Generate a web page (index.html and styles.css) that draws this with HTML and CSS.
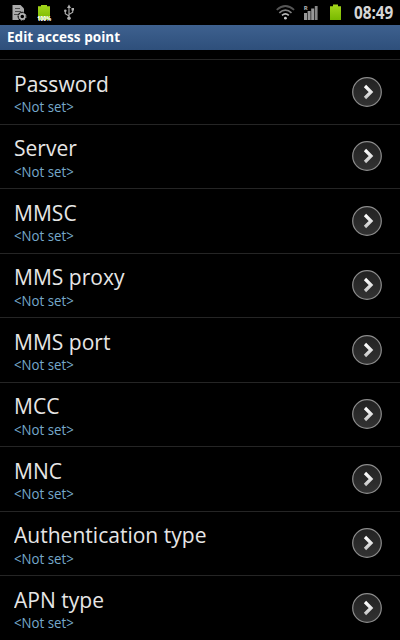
FILE: index.html
```html
<!DOCTYPE html>
<html lang="en">
<head>
<meta charset="utf-8">
<title>Edit access point</title>
<link rel="stylesheet" href="styles.css">
</head>
<body>
<svg class="defs" width="0" height="0" aria-hidden="true">
  <defs>
    <linearGradient id="disc" x1="0" y1="0" x2="0" y2="1"><stop offset="0" stop-color="#222"/><stop offset="1" stop-color="#323232"/></linearGradient>
    <linearGradient id="arrow" x1="0" y1="0" x2="0" y2="1"><stop offset="0" stop-color="#fff"/><stop offset="1" stop-color="#c8c8c8"/></linearGradient>
    <linearGradient id="batt" x1="0" y1="0" x2="0" y2="1"><stop offset="0" stop-color="#a5d71c"/><stop offset="1" stop-color="#78b900"/></linearGradient>
    <symbol id="go" viewBox="0 0 32 32">
      <circle cx="16" cy="16" r="14.3" fill="url(#disc)" stroke="#8c8c8c" stroke-width="1.2"/>
      <path d="M14 10 L20 16 L14 22" fill="none" stroke="url(#arrow)" stroke-width="3.2"/>
    </symbol>
  </defs>
</svg>
<header class="status">
  <svg class="left-icons" width="90" height="25" viewBox="0 0 90 25">
    <path d="M12.5 5H20.5L24 8.5V13L19 20H12.5Z" fill="#aaa"/>
    <path d="M15 8.5H20M15 11.5H21M14 14.5H18" stroke="#4d4d4d" stroke-width="1"/>
    <circle cx="22.3" cy="16.5" r="4.7" fill="#000"/>
    <circle cx="22.3" cy="16.5" r="2.6" fill="none" stroke="#b4b4b4" stroke-width="1.6"/>
    <circle cx="22.3" cy="16.5" r="3.7" fill="none" stroke="#b4b4b4" stroke-width="1" stroke-dasharray="1.45 1.45"/>
    <path d="M38 6.2H41V5H47V6.2H50V20H38Z" fill="url(#batt)"/>
    <text class="percent" x="37.2" y="20.5" textLength="14" lengthAdjust="spacingAndGlyphs">100%</text>
    <g fill="none" stroke="#b0b0b0" stroke-width="1.1"><path d="M69 7V18M69 16L65.3 13.8V11M69 14.5L72.7 12.3V9.5"/></g>
    <path d="M69 4.5L71 8H67Z" fill="#b0b0b0"/><circle cx="69" cy="18.3" r="1.8" fill="#b0b0b0"/><circle cx="65.3" cy="10.7" r="1.3" fill="#b0b0b0"/><path d="M71.5 8H74V10.5H71.5Z" fill="#b0b0b0"/>
  </svg>
  <svg class="right-icons" width="70" height="25" viewBox="275 0 70 25">
    <g fill="none" stroke-width="1.7"><path d="M276.7 9.8Q285.4 2.2 294.1 9.8" stroke="#555"/><path d="M279.3 12.8Q285.4 7.5 291.5 12.8" stroke="#808080"/><path d="M282 15.4Q285.4 12.4 288.8 15.4" stroke="#bbb"/></g>
    <circle cx="285.4" cy="18.2" r="1.4" fill="#ccc"/>
    <g fill="#999"><path d="M304 13h3V20h-3zM307.6 11h3V20h-3zM311.2 8.5h3V20h-3z"/><path d="M314.8 6h2.8v14h-2.8z" fill="#888"/></g>
    <text class="roaming" x="303.8" y="9.8">R</text>
    <path d="M330 6.2H333V4.6H338V6.2H341V20H330Z" fill="url(#batt)"/>
  </svg>
  <span class="clock">08:49</span>
</header>
<h1 class="title"><span>Edit access point</span></h1>
<main class="list">
  <div class="row"><div class="label"><div class="name">Password</div><div class="value">&lt;Not set&gt;</div></div><svg class="go"><use href="#go"/></svg></div>
  <div class="row"><div class="label"><div class="name">Server</div><div class="value">&lt;Not set&gt;</div></div><svg class="go"><use href="#go"/></svg></div>
  <div class="row"><div class="label"><div class="name">MMSC</div><div class="value">&lt;Not set&gt;</div></div><svg class="go"><use href="#go"/></svg></div>
  <div class="row"><div class="label"><div class="name">MMS proxy</div><div class="value">&lt;Not set&gt;</div></div><svg class="go"><use href="#go"/></svg></div>
  <div class="row"><div class="label"><div class="name">MMS port</div><div class="value">&lt;Not set&gt;</div></div><svg class="go"><use href="#go"/></svg></div>
  <div class="row"><div class="label"><div class="name">MCC</div><div class="value">&lt;Not set&gt;</div></div><svg class="go"><use href="#go"/></svg></div>
  <div class="row"><div class="label"><div class="name">MNC</div><div class="value">&lt;Not set&gt;</div></div><svg class="go"><use href="#go"/></svg></div>
  <div class="row"><div class="label"><div class="name">Authentication type</div><div class="value">&lt;Not set&gt;</div></div><svg class="go"><use href="#go"/></svg></div>
  <div class="row"><div class="label"><div class="name">APN type</div><div class="value">&lt;Not set&gt;</div></div><svg class="go"><use href="#go"/></svg></div>
</main>
</body>
</html>
```
FILE: styles.css
```css
* { box-sizing: border-box; }
html, body { margin: 0; height: 640px; overflow: hidden; background: #000; }
body { font-family: "Open Sans", "Noto Sans", sans-serif; color: #e6e6e6; }
.defs { position: absolute; }
.status { display: flex; height: 25px; }
.right-icons { margin-left: 185px; }
.percent { font: 800 7px "Open Sans", sans-serif; fill: #fff; }
.roaming { font: 700 6px "Open Sans", sans-serif; fill: #bbb; }
.clock { margin-left: 8.5px; font-size: 17px; font-weight: 700; line-height: 26px; color: #d6d6d6; white-space: nowrap; transform: scaleX(.9); transform-origin: left; }
.title { margin: 0; height: 25px; padding-left: 7px; background: linear-gradient(#3e618f, #2e4f7b); color: #fff; font-size: 13.5px; font-weight: 700; line-height: 24px; letter-spacing: 0.05px; }
.list { margin-top: 9px; border-top: 1px solid #252525; }
.row { display: flex; justify-content: space-between; height: 64.5px; padding: 7.5px 17px 0 14px; border-bottom: 1px solid #252525; }
.label { transform: scaleX(.935); transform-origin: left; }
.name { margin-top: 1px; font-size: 22.5px; line-height: 30px; white-space: nowrap; }
.value { margin-top: -.5px; font-size: 14.2px; line-height: 18px; color: #76a9cb; }
.go { width: 32px; height: 32px; margin-top: 8px; }
```
